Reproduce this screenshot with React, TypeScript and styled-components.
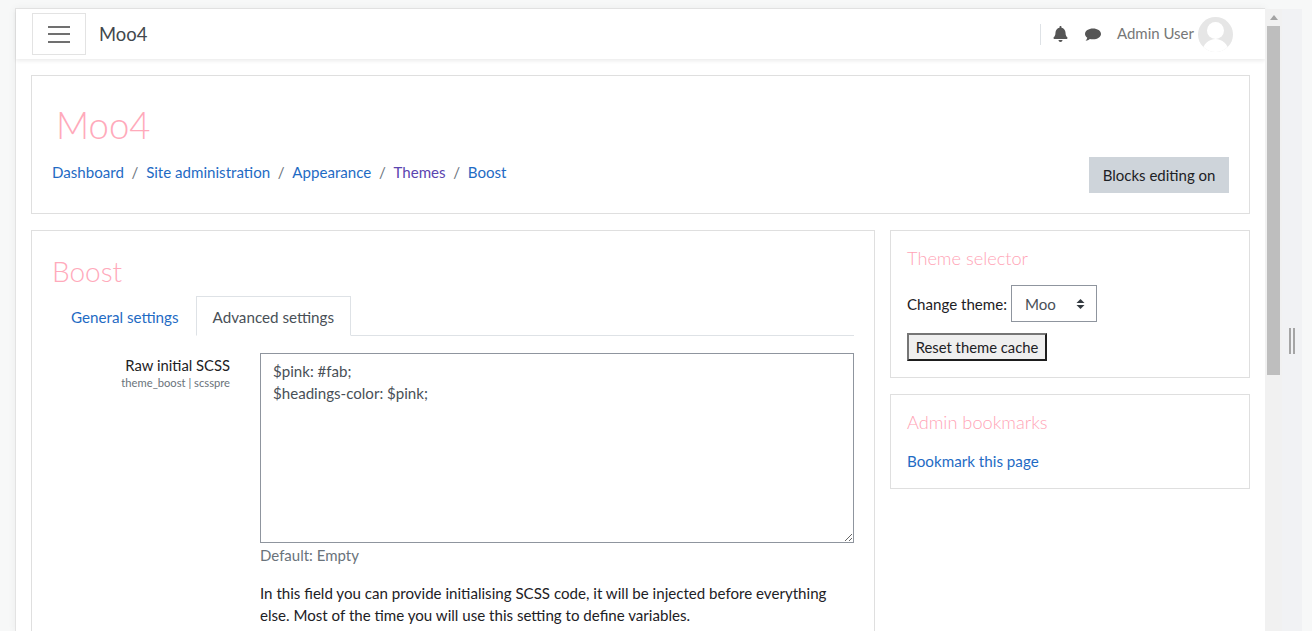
import React from "react";
import styled, { createGlobalStyle } from "styled-components";

const GlobalStyle = createGlobalStyle`
  html, body {
    margin: 0;
    height: 100%;
    overflow: hidden;
    background: #f7f8f8;
  }
  * {
    box-sizing: border-box;
  }
  body {
    font-family: "Lato", "Open Sans", sans-serif;
    font-size: 15px;
    color: #1d2125;
  }
`;

const crumbs = ["Dashboard", "Site administration", "Appearance", "Themes", "Boost"];

function App() {
    return (
        <Shell>
            <GlobalStyle/>
            <Page>
                <Navbar>
                    <MenuButton aria-label="Menu">
                        <MenuBar/>
                        <MenuBar/>
                        <MenuBar/>
                    </MenuButton>
                    <Brand>Moo4</Brand>
                    <NavRight>
                        <NavDivider/>
                        <BellIcon width="15" height="16" viewBox="0 0 448 512">
                            <path d="M224 512c35.300 0 64-28.700 64-64H160c0 35.300 28.700 64 64 64zm215.400-149.700c-19.300-20.800-55.500-52-55.500-154.300 0-77.700-54.500-139.900-127.900-155.200V32c0-17.700-14.300-32-32-32s-32 14.300-32 32v20.800C118.600 68.100 64.100 130.300 64.100 208c0 102.300-36.200 133.500-55.500 154.300-6 6.400-8.700 14.100-8.600 21.700.1 16.400 13 32 32.100 32h383.800c19.100 0 32-15.600 32.100-32 .1-7.600-2.600-15.300-8.600-21.700z"/>
                        </BellIcon>
                        <ChatIcon width="16" height="14" viewBox="0 0 16 14">
                            <path d="M8 .5C3.600.5 0 2.900 0 5.900c0 1.500.9 2.800 2.300 3.800-.2 1.100-.8 2.200-1.700 3 1.600-.1 3.100-.8 4.200-1.800 1 .2 2.100.4 3.200.4 4.400 0 8-2.400 8-5.400S12.400.5 8 .5z"/>
                        </ChatIcon>
                        <UserName>Admin User</UserName>
                        <Avatar width="35" height="35" viewBox="0 0 35 35">
                            <defs>
                                <clipPath id="avatar-clip">
                                    <circle cx="17.500" cy="17.500" r="17.500"/>
                                </clipPath>
                            </defs>
                            <g clipPath="url(#avatar-clip)">
                                <rect width="35" height="35" fill="#e6e6e6"/>
                                <circle cx="17.500" cy="13.500" r="8.500" fill="#fff"/>
                                <path d="M4 35c1-8 7-13 13.500-13S30 27 31 35z" fill="#fff"/>
                            </g>
                        </Avatar>
                    </NavRight>
                </Navbar>
                <Content>
                    <HeaderCard>
                        <SiteTitle>Moo4</SiteTitle>
                        <HeaderRow>
                            <Breadcrumb>
                                {crumbs.map((crumb, i) => (
                                    <React.Fragment key={crumb}>
                                        {i > 0 && <CrumbSep>/</CrumbSep>}
                                        <Link $visited={crumb === "Themes"}>{crumb}</Link>
                                    </React.Fragment>
                                ))}
                            </Breadcrumb>
                            <EditButton>Blocks editing on</EditButton>
                        </HeaderRow>
                    </HeaderCard>
                    <Columns>
                        <MainCard>
                            <PageTitle>Boost</PageTitle>
                            <Tabs>
                                <Tab><Link>General settings</Link></Tab>
                                <Tab $active>Advanced settings</Tab>
                            </Tabs>
                            <SettingRow>
                                <SettingLabel>
                                    <LabelName>Raw initial SCSS</LabelName>
                                    <LabelKey>theme_boost | scsspre</LabelKey>
                                </SettingLabel>
                                <SettingBody>
                                    <CodeArea readOnly defaultValue={"$pink: #fab;\n$headings-color: $pink;"}/>
                                    <DefaultInfo>Default: Empty</DefaultInfo>
                                    <Description>
                                        In this field you can provide initialising SCSS code, it will be injected before everything else. Most of the time you will use this setting to define variables.
                                    </Description>
                                </SettingBody>
                            </SettingRow>
                        </MainCard>
                        <Side>
                            <SideCard>
                                <SideTitle>Theme selector</SideTitle>
                                <ThemeRow>
                                    Change theme:
                                    <ThemeSelect>
                                        Moo
                                        <svg width="9" height="12" viewBox="0 0 9 12">
                                            <path d="M4.500 1 8.500 5H.5zM4.500 11 .5 7h8z" fill="#343a40"/>
                                        </svg>
                                    </ThemeSelect>
                                </ThemeRow>
                                <ResetButton>Reset theme cache</ResetButton>
                            </SideCard>
                            <SideCard>
                                <SideTitle>Admin bookmarks</SideTitle>
                                <BookmarkRow><Link>Bookmark this page</Link></BookmarkRow>
                            </SideCard>
                        </Side>
                    </Columns>
                </Content>
            </Page>
            <Scrollbar>
                <ScrollArrow/>
                <ScrollThumb/>
            </Scrollbar>
            <Drawer>
                <Grip/>
                <Grip/>
            </Drawer>
        </Shell>
    );
}

const Shell = styled.div`
  display: flex;
  height: 631px;
  padding: 8px 10px 0 15px;
  overflow: hidden;
`;

const Page = styled.div`
  flex: 1;
  min-width: 0;
  background: #fff;
  border-top: 1px solid #e3e3e3;
  border-left: 1px solid #e3e3e3;
  box-shadow: 0 0 8px rgba(0, 0, 0, 0.05);
`;

const Navbar = styled.div`
  display: flex;
  align-items: center;
  height: 50px;
  padding: 0 32px 0 16px;
  box-shadow: 0 2px 4px rgba(0, 0, 0, 0.08);
`;

const MenuButton = styled.div`
  display: flex;
  flex-direction: column;
  justify-content: center;
  gap: 5.500px;
  width: 54px;
  height: 42px;
  padding: 0 15px;
  border: 1px solid #e3e3e3;
`;

const MenuBar = styled.span`
  height: 2px;
  background: #707070;
`;

const Brand = styled.div`
  margin-left: 13px;
  font-size: 18.400px;
  font-weight: 400;
  color: #42474c;
`;

const NavRight = styled.div`
  display: flex;
  align-items: center;
  margin-left: auto;
`;

const NavDivider = styled.span`
  width: 1px;
  height: 21px;
  background: #dee2e6;
  margin-right: 12px;
`;

const BellIcon = styled.svg`
  fill: #555;
  margin-right: 17px;
`;

const ChatIcon = styled.svg`
  fill: #555;
  margin: 2px 16px 0 0;
`;

const UserName = styled.span`
  color: #777;
  margin-bottom: 3px;
`;

const Avatar = styled.svg`
  margin-left: 4px;
`;

const Content = styled.div`
  padding: 16px 15px 0;
`;

const Card = styled.div`
  background: #fff;
  border: 1px solid #dfdfdf;
`;

const HeaderCard = styled(Card)`
  height: 139px;
  padding: 21px 20px 0 20px;
`;

const SiteTitle = styled.h1`
  margin: 0 0 0 4px;
  font-size: 36.500px;
  font-weight: 300;
  line-height: 56px;
  color: #ffaabb;
`;

const HeaderRow = styled.div`
  display: flex;
  justify-content: space-between;
  align-items: flex-start;
`;

const Breadcrumb = styled.div`
  display: flex;
  margin-top: 10px;
  font-size: 15.100px;
`;

const Link = styled.span<{ $visited?: boolean }>`
  color: ${({$visited}) => ($visited ? "#5b45b0" : "#1f6bc4")};
`;

const CrumbSep = styled.span`
  margin: 0 7.700px;
  color: #6a737b;
`;

const EditButton = styled.div`
  display: flex;
  align-items: center;
  height: 36px;
  margin-top: 4px;
  padding: 0 13.500px;
  background: #ced4da;
`;

const Columns = styled.div`
  display: flex;
  gap: 15px;
  margin-top: 16px;
`;

const MainCard = styled(Card)`
  width: 844px;
  height: 420px;
  padding: 20px 20px 0;
`;

const PageTitle = styled.h2`
  margin: 0;
  font-size: 28px;
  font-weight: 300;
  line-height: 40px;
  color: #ffaabb;
`;

const Tabs = styled.div`
  display: flex;
  align-items: flex-end;
  height: 40px;
  margin: 5px 0 0 2px;
  border-bottom: 1px solid #dee2e6;
  font-size: 15.200px;
`;

const Tab = styled.div<{ $active?: boolean }>`
  height: 40px;
  margin-bottom: -1px;
  padding: 2px 16px 0;
  display: flex;
  align-items: center;
  color: #495057;
  background: #fff;
  border: 1px solid ${({$active}) => ($active ? "#dee2e6" : "transparent")};
  border-bottom-color: ${({$active}) => ($active ? "#fff" : "transparent")};
`;

const SettingRow = styled.div`
  display: flex;
  margin-top: 17px;
`;

const SettingLabel = styled.div`
  width: 178px;
  margin-right: 30px;
  padding-top: 1px;
  text-align: right;
`;

const LabelName = styled.div`
  font-size: 14.800px;
  line-height: 22px;
`;

const LabelKey = styled.div`
  font-size: 11.200px;
  line-height: 14px;
  color: #6a737b;
`;

const SettingBody = styled.div`
  flex: 1;
  min-width: 0;
`;

const CodeArea = styled.textarea`
  display: block;
  width: 100%;
  height: 190px;
  padding: 6px 12px;
  border: 1px solid #8f959e;
  border-radius: 0;
  outline: none;
  font: inherit;
  font-size: 15.100px;
  line-height: 22px;
  color: #495057;
`;

const DefaultInfo = styled.div`
  margin-top: 1px;
  line-height: 22px;
  color: #6a737b;
`;

const Description = styled.p`
  margin: 16px 0 0;
  font-size: 15.100px;
  line-height: 22px;
`;

const Side = styled.div`
  flex: 1;
  display: flex;
  flex-direction: column;
  gap: 16px;
`;

const SideCard = styled(Card)`
  padding: 15px 16px 16px;
`;

const SideTitle = styled.h5`
  margin: 0;
  padding-top: 1px;
  font-size: 18.200px;
  font-weight: 300;
  line-height: 22px;
  color: #ffa4b6;
`;

const ThemeRow = styled.div`
  display: flex;
  align-items: center;
  gap: 4px;
  margin-top: 16px;
  font-size: 15.100px;
`;

const ThemeSelect = styled.div`
  display: flex;
  align-items: center;
  justify-content: space-between;
  width: 86px;
  height: 37px;
  padding: 0 11px 0 13px;
  border: 1px solid #8f959e;
  color: #495057;
`;

const ResetButton = styled.div`
  display: block;
  width: 140px;
  margin-top: 11px;
  padding: 0 6px;
  height: 28px;
  line-height: 24px;
  font-size: 14.800px;
  white-space: nowrap;
  text-align: center;
  background: #efefef;
  border: 2px solid;
  border-color: #767676 #1d1d1d #1d1d1d #767676;
`;

const BookmarkRow = styled.div`
  margin-top: 17px;
  font-size: 15.200px;
  line-height: 22px;
`;

const Scrollbar = styled.div`
  display: flex;
  flex-direction: column;
  align-items: center;
  width: 17px;
  margin-top: 1px;
  padding: 0 2px;
  background: #f1f1f1;
`;

const ScrollArrow = styled.span`
  margin: 6px 0 6px;
  border-left: 4px solid transparent;
  border-right: 4px solid transparent;
  border-bottom: 5px solid #a3a3a3;
`;

const ScrollThumb = styled.div`
  width: 100%;
  height: 349px;
  background: #bebebe;
`;

const Drawer = styled.div`
  display: flex;
  justify-content: center;
  gap: 2px;
  width: 20px;
  margin-top: 1px;
  padding-top: 319px;
  background: #f1f2f4;
`;

const Grip = styled.span`
  width: 2px;
  height: 26px;
  background: #a5a5a5;
`;

export default App;
